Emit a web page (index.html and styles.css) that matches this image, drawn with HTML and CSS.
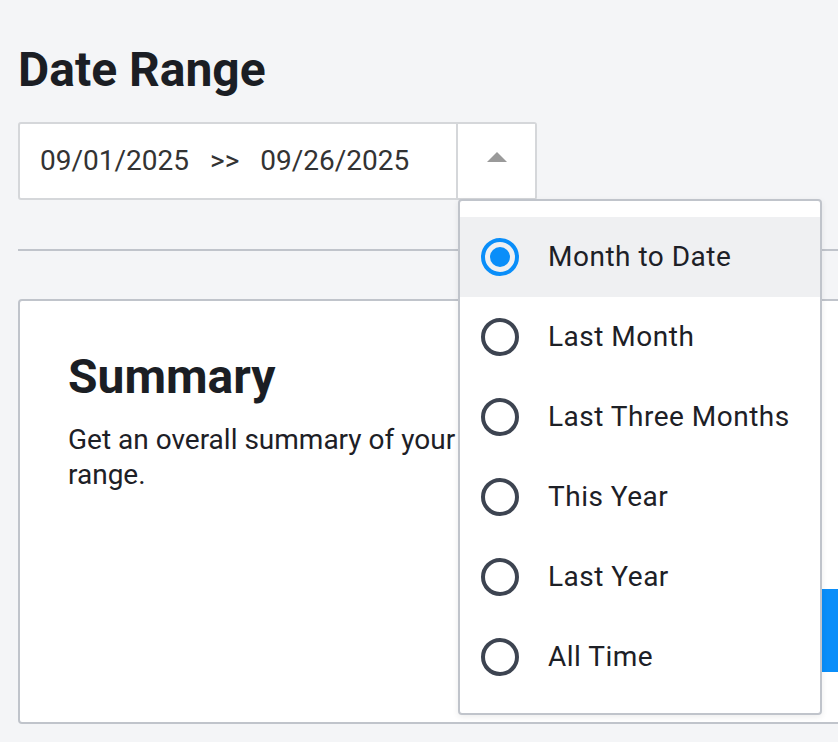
FILE: index.html
```html
<!DOCTYPE html>
<html lang="en">
	<head>
		<meta charset="utf-8" />
		<title>Date Range</title>
		<link rel="stylesheet" href="styles.css">
	</head>

	<body>
		<div class="page">
			<h1 class="title">Date Range</h1>

			<div class="picker-wrap">
				<div class="picker">
					<div class="picker-dates">
						<span>09/01/2025</span>
						<span class="picker-sep">&gt;&gt;</span>
						<span>09/26/2025</span>
					</div>
					<button type="button" class="picker-toggle"><span class="caret-up"></span></button>
				</div>

				<ul class="menu">
					<li class="menu-item is-active"><span class="radio is-checked"></span>Month to Date</li>
					<li class="menu-item"><span class="radio"></span>Last Month</li>
					<li class="menu-item"><span class="radio"></span>Last Three Months</li>
					<li class="menu-item"><span class="radio"></span>This Year</li>
					<li class="menu-item"><span class="radio"></span>Last Year</li>
					<li class="menu-item"><span class="radio"></span>All Time</li>
				</ul>
			</div>

			<hr class="rule" />

			<div class="card">
				<div class="card-text">
					<h2>Summary</h2>
					<p>Get an overall summary of your account for this date range.</p>
				</div>
				<button type="button" class="card-btn">View Summary</button>
			</div>
		</div>
	</body>
</html>
```

FILE: styles.css
```css
html,
body {
	margin: 0;
	padding: 0;
	background: #f4f5f7;
	overflow: hidden;
	font-family: Roboto, "Liberation Sans", sans-serif;
	color: #1d2026;
}
.page {
	width: 1100px;
	padding: 41px 18px 0;
}
.title {
	margin: 0 0 23px;
	font-size: 48px;
	line-height: 1.2;
	font-weight: 700;
	color: #1b1e24;
}
.picker-wrap {
	position: relative;
}
.picker {
	display: inline-flex;
	height: 78px;
	box-sizing: border-box;
	border: 2px solid #d5d7da;
	border-radius: 3px;
	background: #fff;
}
.picker-dates {
	width: 416px;
	padding-left: 20px;
	display: flex;
	align-items: center;
	font-size: 28px;
	color: #333;
}
.picker-sep {
	margin: 0 21px;
}
.picker-toggle {
	width: 79px;
	border: 0;
	border-left: 2px solid #d5d7da;
	background: #fff;
	padding: 0;
	display: flex;
	align-items: center;
	justify-content: center;
	cursor: pointer;
}
.caret-up {
	width: 0;
	height: 0;
	margin-top: -8px;
	border-left: 10px solid transparent;
	border-right: 10px solid transparent;
	border-bottom: 10px solid #9a9a9a;
}
.menu {
	position: absolute;
	top: 77px;
	left: 440px;
	z-index: 2;
	width: 364px;
	box-sizing: border-box;
	margin: 0;
	padding: 16px 0;
	list-style: none;
	background: #fff;
	border: 2px solid #c0c4cb;
	border-radius: 4px;
	box-shadow: 0 2px 6px rgba(0, 0, 0, 0.08);
}
.menu-item {
	height: 80px;
	display: flex;
	align-items: center;
	gap: 29px;
	padding-left: 21px;
	font-size: 28px;
	letter-spacing: 0.5px;
	color: #1d2026;
	cursor: pointer;
}
.menu-item.is-active {
	background: #eff0f2;
}
.radio {
	width: 38px;
	height: 38px;
	box-sizing: border-box;
	border: 4px solid #3d4451;
	border-radius: 50%;
	display: flex;
	align-items: center;
	justify-content: center;
	flex: none;
}
.radio.is-checked {
	border-color: #0a8ef9;
}
.radio.is-checked::after {
	content: "";
	width: 20px;
	height: 20px;
	border-radius: 50%;
	background: #0a8ef9;
}
.rule {
	margin: 49px 0 48px;
	border: 0;
	border-top: 2px solid #c0c4cb;
}
.card {
	width: 1054px;
	height: 425px;
	box-sizing: border-box;
	display: flex;
	gap: 32px;
	padding: 47px 48px 50px;
	background: #fff;
	border: 2px solid #c0c4cb;
	border-radius: 4px;
}
.card-text {
	flex: 1;
}
.card-text h2 {
	margin: 0 0 17px;
	font-size: 48px;
	line-height: 1.2;
	font-weight: 700;
	color: #1b1e24;
}
.card-text p {
	margin: 0;
	font-size: 28px;
	line-height: 35px;
	color: #1d2026;
}
.card-btn {
	align-self: flex-end;
	width: 200px;
	height: 83px;
	border: 0;
	border-radius: 0;
	background: #0a8ef9;
	color: #fff;
	font-family: inherit;
	font-size: 24px;
}
```
